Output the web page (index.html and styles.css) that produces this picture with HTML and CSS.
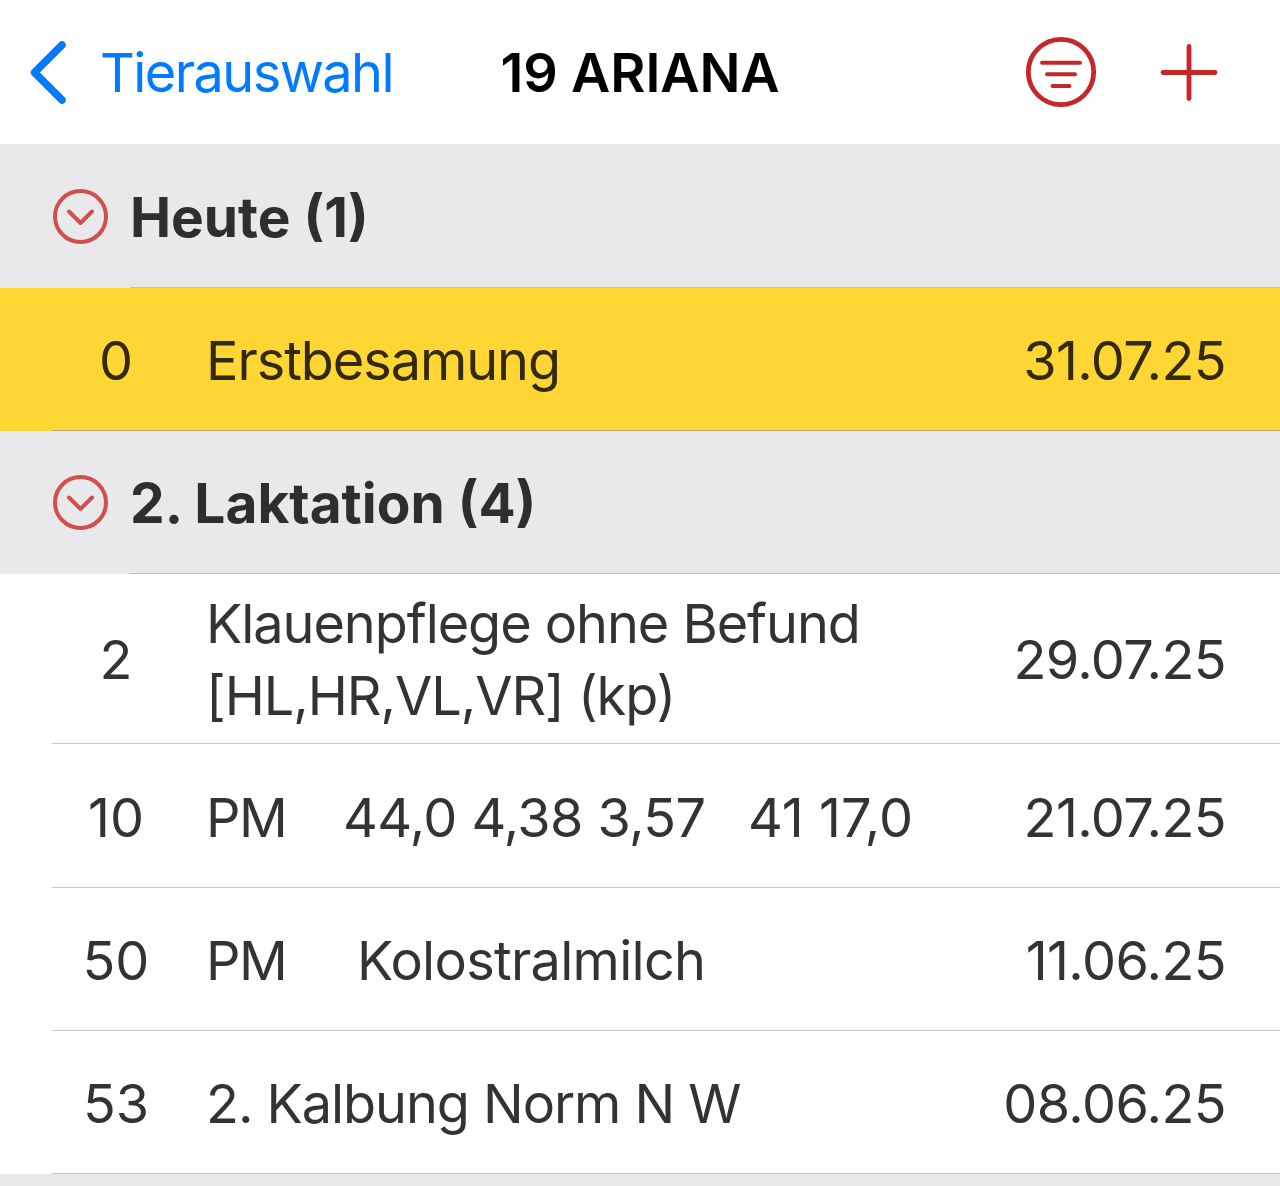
FILE: index.html
```html
<!DOCTYPE html>
<html lang="de">
<head>
    <meta charset="UTF-8">
    <meta name="viewport" content="width=device-width, initial-scale=1.0">
    <title>19 ARIANA</title>
    <link rel="stylesheet" href="styles.css">
</head>
<body>

    <header class="navbar">
        <a class="back" href="#">
            <svg class="back-icon" width="38" height="64" viewBox="0 0 38 64"><path d="M33 4L5.500 31.500L33 59"/></svg>
            <span>Tierauswahl</span>
        </a>
        <h1 class="title">19 ARIANA</h1>
        <div class="actions">
            <svg class="filter-icon" width="72" height="72" viewBox="0 0 72 72">
                <circle cx="36" cy="36" r="32.700"/>
                <path d="M17 26.700H55M22 38.300H50M27.500 50H44.500"/>
            </svg>
            <svg class="add-icon" width="58" height="58" viewBox="0 0 58 58"><path d="M29 3.500V55.500M3 29.500H55"/></svg>
        </div>
    </header>

    <main>
        <!-- Heute -->
        <div class="section">
            <svg class="toggle" width="56" height="56" viewBox="0 0 56 56"><circle cx="28.500" cy="27.500" r="25.500"/><path d="M17 22.500L28.500 34L40 22.500"/></svg>
            <h2>Heute (1)</h2>
        </div>
        <div class="row highlight">
            <span class="days">0</span>
            <span class="event">Erstbesamung</span>
            <span class="date">31.07.25</span>
        </div>

        <!-- 2. Laktation -->
        <div class="section short">
            <svg class="toggle" width="56" height="56" viewBox="0 0 56 56"><circle cx="28.500" cy="27.500" r="25.500"/><path d="M17 22.500L28.500 34L40 22.500"/></svg>
            <h2>2. Laktation (4)</h2>
        </div>
        <div class="row tall">
            <span class="days">2</span>
            <span class="event">Klauenpflege ohne Befund<br>[HL,HR,VL,VR] (kp)</span>
            <span class="date">29.07.25</span>
        </div>
        <div class="row milk">
            <span class="days">10</span>
            <span class="event test">
                <span class="code">PM</span>
                <span class="yield">44,0 4,38 3,57</span>
                <span class="cells">41 17,0</span>
            </span>
            <span class="date">21.07.25</span>
        </div>
        <div class="row">
            <span class="days">50</span>
            <span class="event test">
                <span class="code">PM</span>
                <span class="note">Kolostralmilch</span>
            </span>
            <span class="date">11.06.25</span>
        </div>
        <div class="row">
            <span class="days">53</span>
            <span class="event">2. Kalbung Norm N W</span>
            <span class="date">08.06.25</span>
        </div>
        <div class="next-section"></div>
    </main>

</body>
</html>
```

FILE: styles.css
```css
* {
    box-sizing: border-box;
}
body {
    margin: 0;
    font-family: Inter, "Liberation Sans", sans-serif;
    font-size: 54px;
    color: #333;
    background-color: #fff;
}
svg {
    fill: none;
    stroke: #c62828;
    stroke-width: 4;
    stroke-linecap: round;
    stroke-linejoin: round;
    flex-shrink: 0;
}
.navbar {
    display: grid;
    grid-template-columns: minmax(0, 1fr) auto minmax(0, 1fr);
    align-items: center;
    height: 144px;
    padding-top: 1px;
}
.back {
    display: flex;
    align-items: center;
    gap: 33px;
    padding-left: 29px;
    color: #007aff;
    letter-spacing: -1.55px;
    text-decoration: none;
}
.back-icon {
    stroke: #007aff;
    stroke-width: 7.5;
}
.title {
    margin: 0;
    font-size: 54px;
    font-weight: 600;
    letter-spacing: -0.1px;
    color: #000;
}
.actions {
    display: flex;
    justify-content: flex-end;
    align-items: center;
    gap: 63px;
    padding: 0 62px 1px 0;
}
.filter-icon circle,
.add-icon {
    stroke-width: 4.8;
}
.section {
    display: flex;
    align-items: center;
    gap: 22px;
    height: 144px;
    padding: 1px 0 0 52px;
    background: linear-gradient(#bfbfc2, #bfbfc2) right bottom / calc(100% - 130px) 1px no-repeat #e9e9eb;
}
.section.short {
    height: 143px;
}
.section h2 {
    margin: 0;
    font-size: 55px;
    font-weight: 700;
    color: #2e2e30;
}
.toggle {
    stroke: #d0504f;
}
.row {
    display: grid;
    grid-template-columns: 128px 1fr auto;
    align-items: center;
    height: 143px;
    padding: 1px 54px 0 52px;
    white-space: nowrap;
    background: linear-gradient(#c8c8ca, #c8c8ca) right bottom / calc(100% - 52px) 1px no-repeat;
}
.row.tall {
    height: 170px;
    line-height: 72px;
}
.row.milk {
    height: 144px;
    padding-top: 2px;
}
.row.highlight {
    color: #332a0d;
    background-color: #ffd633;
    background-image: linear-gradient(#b9a86a, #b9a86a);
}
.days {
    text-align: center;
}
.event {
    padding-left: 26px;
    letter-spacing: -1.05px;
}
.date {
    letter-spacing: -0.6px;
}
.test {
    display: flex;
}
.code {
    width: 137px;
    letter-spacing: -1.6px;
}
.yield {
    width: 405px;
    letter-spacing: -0.6px;
}
.cells {
    letter-spacing: 0;
}
.note {
    padding-left: 14px;
    letter-spacing: -0.7px;
}
.next-section {
    height: 12px;
    background-color: #e9e9eb;
}
```
